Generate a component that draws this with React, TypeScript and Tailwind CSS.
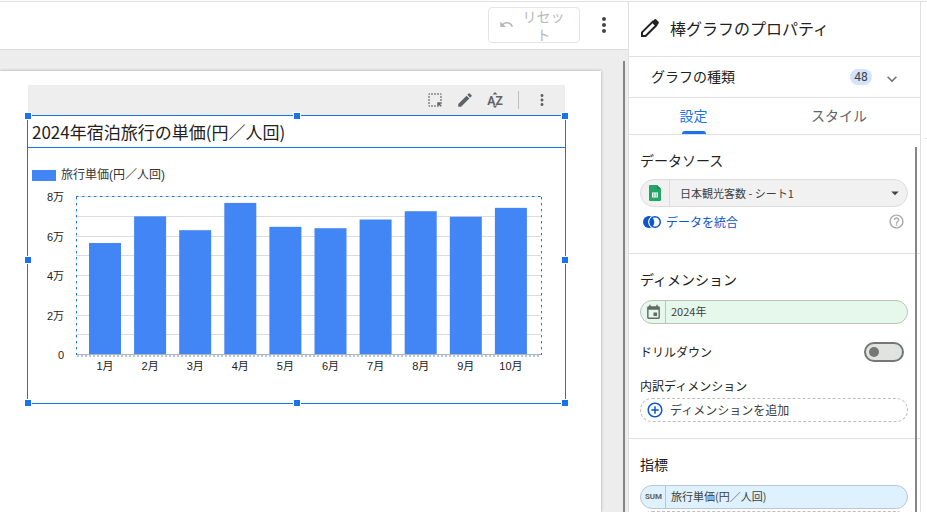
import React, { useState } from 'react';
import {
  MdAddCircleOutline,
  MdArrowDropDown,
  MdEdit,
  MdEvent,
  MdExpandMore,
  MdHelpOutline,
  MdHighlightAlt,
  MdMoreVert,
  MdUndo,
} from 'react-icons/md';

interface MonthItem {
  label: string;
  value: number;
}

// unit price per guest, in units of 10,000 yen
const months: MonthItem[] = [
  { label: '1月', value: 5.67 },
  { label: '2月', value: 7.02 },
  { label: '3月', value: 6.32 },
  { label: '4月', value: 7.7 },
  { label: '5月', value: 6.49 },
  { label: '6月', value: 6.42 },
  { label: '7月', value: 6.86 },
  { label: '8月', value: 7.28 },
  { label: '9月', value: 7.0 },
  { label: '10月', value: 7.45 },
];

const PLOT = { left: 48, right: 513, top: 10, bottom: 168 };
const STEP = 45.1;
const UNIT = (PLOT.bottom - PLOT.top) / 8;

const yOf = (value: number) => PLOT.bottom - value * UNIT;

// ============================================================================
// Icons
// ============================================================================

const PencilIcon: React.FC = () => (
  <svg width="20" height="20" viewBox="0 0 20 20" aria-hidden="true">
    <path d="M2 18v-3.6L12.8 3.6l3.6 3.6L5.600 18z" fill="none" stroke="currentColor" strokeWidth="2" strokeLinejoin="round" />
    <path d="M11.600 4.200l2.500-2.500a1.700 1.700 0 0 1 2.400 0l1.800 1.800a1.700 1.700 0 0 1 0 2.400l-2.500 2.500z" fill="currentColor" />
    <path d="M1 15.500l3.500 3.500H1z" fill="currentColor" />
  </svg>
);

const SortIcon: React.FC = () => (
  <svg width="18" height="18" viewBox="0 0 18 18" fill="currentColor" aria-hidden="true">
    <path d="M6.500 3.500L9 1l2.500 2.500zM6.500 14.500L9 17l2.500-2.500z" />
    <text x="9" y="13.500" textAnchor="middle" className="text-[12px] font-bold font-['Roboto']">AZ</text>
  </svg>
);

const BlendIcon: React.FC = () => (
  <svg width="20" height="14" viewBox="0 0 20 14" aria-hidden="true">
    <circle cx="7" cy="7" r="6" fill="#0b57d0" />
    <circle cx="13" cy="7" r="6.500" fill="#fff" />
    <circle cx="13" cy="7" r="5.300" fill="none" stroke="#0b57d0" strokeWidth="1.500" />
    <path d="M10 2.200a6 6 0 0 1 0 9.600a6 6 0 0 1 0-9.600z" fill="#0b57d0" />
    <path d="M9.300 1.800a6.400 6.400 0 0 0 0 10.400" fill="none" stroke="#fff" strokeWidth="1" />
  </svg>
);

const SheetsIcon: React.FC = () => (
  <svg width="12" height="16" viewBox="0 0 12 16" aria-hidden="true">
    <path d="M1 0h7l4 4v11a1 1 0 0 1-1 1H1a1 1 0 0 1-1-1V1a1 1 0 0 1 1-1z" fill="#23a566" />
    <path d="M8 0l4 4H8z" fill="#1c8c55" />
    <path d="M3 7.500h6v5H3z" fill="#fff" />
    <path d="M4 8.500h1.500v1H4zM6.500 8.500H8v1H6.500zM4 10.500h1.500v1H4zM6.500 10.500H8v1H6.500z" fill="#23a566" />
  </svg>
);

// ============================================================================
// Chart
// ============================================================================

const BarChart: React.FC = () => (
  <svg
    viewBox="0 0 537 216"
    className="block w-full h-auto text-[11px] font-['Liberation_Sans','Noto_Sans_CJK_JP',sans-serif]"
    role="img"
    aria-label="旅行単価(円／人回)"
  >
    {[1, 2, 3, 4, 5, 6, 7, 8].map((v) => (
      <rect key={v} x={PLOT.left} y={Math.round(yOf(v)) - 1} width={PLOT.right - PLOT.left} height="1" fill="#dcdcdc" />
    ))}
    {months.map((m, i) => (
      <rect key={m.label} x={61 + i * STEP} y={yOf(m.value)} width="32" height={PLOT.bottom - yOf(m.value)} fill="#4285f4" />
    ))}
    <rect x={PLOT.left} y={PLOT.bottom - 1} width={PLOT.right - PLOT.left} height="1" fill="#b3b3b3" />
    <path d={`M${PLOT.left + 1} 169H${PLOT.right - 2}`} stroke="#a8c7fa" strokeWidth="2" strokeDasharray="2 2" />
    <path d="M48 9.5H514M48.5 10V168M513.5 10V168" fill="none" stroke="#1a73e8" strokeDasharray="2 4" />
    <path d="M48 9.5H514M48.5 10V168M513.5 10V168" fill="none" stroke="#1a73e8" strokeOpacity="0.4" strokeDasharray="3 3" />
    {[0, 2, 4, 6, 8].map((v) => (
      <text key={v} x="36" y={yOf(v) + 4} textAnchor="end" fill="#222">
        {v === 0 ? '0' : `${v}万`}
      </text>
    ))}
    {months.map((m, i) => (
      <text key={m.label} x={77 + i * STEP} y="183" textAnchor="middle" fill="#222">
        {m.label}
      </text>
    ))}
  </svg>
);

const handles = [
  '-left-1 -top-1',
  'left-1/2 -translate-x-1/2 -top-1',
  '-right-1 -top-1',
  '-left-1 top-1/2 -translate-y-1/2',
  '-right-1 top-1/2 -translate-y-1/2',
  '-left-1 -bottom-1',
  'left-1/2 -translate-x-1/2 -bottom-1',
  '-right-1 -bottom-1',
];

const ChartWidget: React.FC = () => (
  <div className="ml-[27px] mr-[35px]">
    <div className="mx-px h-[30px] bg-[#eee] flex items-center justify-end text-[#5f6368]">
      <button aria-label="範囲を選択" className="mr-3"><MdHighlightAlt size={18} /></button>
      <button aria-label="編集" className="mr-3"><MdEdit size={18} /></button>
      <button aria-label="並べ替え" className="mr-3.5"><SortIcon /></button>
      <span className="w-px h-[18px] bg-[#bdbdbd] mr-3.5" />
      <button aria-label="その他" className="mr-3.5"><MdMoreVert size={18} /></button>
    </div>

    <div className="relative border border-[#1a73e8]">
      <h2 className="h-8 pl-1 border-b border-[#1a73e8] text-[17px] leading-8 text-[#212121]">
        2024年宿泊旅行の単価(円／人回)
      </h2>
      <div className="mt-[19px] ml-1 h-4 flex items-center gap-[5px] text-xs leading-4 text-[#333] font-['Liberation_Sans','Noto_Sans_CJK_JP',sans-serif]">
        <span className="w-6 h-[11px] bg-[#4285f4]" />
        旅行単価(円／人回)
      </div>
      <div className="mt-1">
        <BarChart />
      </div>
      {handles.map((place) => (
        <span key={place} className={`absolute size-2 bg-[#1a73e8] border border-white ${place}`} />
      ))}
    </div>
  </div>
);

// ============================================================================
// Properties panel
// ============================================================================

const PropertiesPanel: React.FC = () => {
  const [tab, setTab] = useState<'setup' | 'style'>('setup');
  const [drilldown, setDrilldown] = useState(false);

  return (
    <aside className="w-[293px] shrink-0 flex flex-col border-x border-[#e0e0e0] text-[#212121]">
      <header className="h-[55px] shrink-0 pl-[11px] pb-0.5 flex items-center gap-2.5 border-b border-[#e0e0e0]">
        <PencilIcon />
        <h1 className="text-base">棒グラフのプロパティ</h1>
      </header>

      <button className="h-[41px] shrink-0 pl-[22px] pr-[18px] pb-0.5 flex items-center border-b border-[#e0e0e0] text-left">
        <span className="flex-1 text-sm">グラフの種類</span>
        <span className="w-[22px] h-4 mt-0.5 rounded-full bg-[#d3e3fd] text-center text-xs leading-4 text-[#3c4043] font-['Roboto']">48</span>
        <MdExpandMore size={20} className="ml-2.5 mt-1.5 text-[#757575]" />
      </button>

      <div role="tablist" className="h-[37px] shrink-0 flex border-b border-[#e0e0e0] text-sm">
        <button role="tab" aria-selected={tab === 'setup'} onClick={() => setTab('setup')} className="w-[129px] flex flex-col items-center justify-between text-[#1a73e8]">
          <span className="leading-8 pt-px">設定</span>
          {tab === 'setup' && <span className="w-6 h-[3px] rounded-t-full bg-[#1a73e8]" />}
        </button>
        <button role="tab" aria-selected={tab === 'style'} onClick={() => setTab('style')} className="flex-1 flex flex-col items-center justify-between text-[#5f6368]">
          <span className="leading-8 pt-px">スタイル</span>
          {tab === 'style' && <span className="w-6 h-[3px] rounded-t-full bg-[#1a73e8]" />}
        </button>
      </div>

      <div className="relative flex-1 min-h-0 overflow-hidden">
        {/* Data source */}
        <section className="h-[119px] pt-[15px] pl-[11px] pr-3 border-b border-[#e0e0e0]">
          <label htmlFor="source" className="block text-sm leading-5">データソース</label>
          <div className="mt-[9px] h-7 flex items-center rounded-full border border-[#dadce0] bg-[#f1f1f1] overflow-hidden">
            <span className="w-[29px] h-full flex items-center justify-center border-r border-[#dadce0]"><SheetsIcon /></span>
            <select id="source" className="flex-1 h-full pl-2.5 appearance-none bg-transparent text-[11px] text-[#3c4043]">
              <option>日本観光客数 - シート1</option>
            </select>
            <MdArrowDropDown size={18} className="mr-[3px] text-[#444]" />
          </div>
          <div className="mt-1.5 px-0.5 flex items-center justify-between">
            <a href="#blend" className="flex items-center gap-1 text-xs text-[#0b57d0]">
              <BlendIcon />
              データを統合
            </a>
            <button aria-label="ヘルプ" className="mr-px"><MdHelpOutline size={17} className="text-[#a8a8a8]" /></button>
          </div>
        </section>

        {/* Dimensions */}
        <section className="h-[185px] pt-[15px] pl-[11px] pr-3 border-b border-[#e0e0e0]">
          <h2 className="text-sm leading-5">ディメンション</h2>
          <button className="mt-[11px] w-full h-6 flex items-center rounded-full border border-[#bdc1bf] bg-[#e6f8ec] text-[11px] text-[#3c4043] overflow-hidden">
            <span className="w-[25px] h-full flex items-center justify-center border-r border-[#bdc1bf]"><MdEvent size={17} className="text-[#5f6b63]" /></span>
            <span className="pl-[5px] pb-px">2024年</span>
          </button>
          <div className="mt-[18px] h-5 pr-1 flex items-center justify-between">
            <label htmlFor="drilldown" className="text-xs">ドリルダウン</label>
            <input
              id="drilldown"
              type="checkbox"
              role="switch"
              checked={drilldown}
              onChange={(e) => setDrilldown(e.target.checked)}
              className="appearance-none w-10 h-5 pl-[3px] flex items-center rounded-full border-2 border-[#747775] bg-[#e1e3e1] before:size-2.5 before:rounded-full before:bg-[#747775] checked:before:ml-5"
            />
          </div>
          <h3 className="mt-4 text-xs leading-4">内訳ディメンション</h3>
          <button className="mt-1 w-full h-6 pl-[5px] flex items-center gap-1.5 rounded-full border border-dashed border-[#bdbdbd] text-xs text-[#3c4043]">
            <MdAddCircleOutline size={18} className="text-[#0b57d0]" />
            ディメンションを追加
          </button>
        </section>

        {/* Metrics */}
        <section className="pt-[15px] pl-[11px] pr-3">
          <h2 className="text-sm leading-5">指標</h2>
          <button className="mt-[11px] w-full h-6 flex items-center rounded-full border border-[#bcc5cb] bg-[#def1fe] text-[11px] text-[#3c4043] overflow-hidden">
            <span className="w-[25px] h-full pl-px flex items-center justify-center border-r border-[#bcc5cb] text-[8px] font-bold text-[#5f6368] font-['Roboto']">SUM</span>
            <span className="pl-[5px] pb-px">旅行単価(円／人回)</span>
          </button>
          <button aria-label="指標を追加" className="mt-0.5 w-full h-6 block rounded-full border border-dashed border-[#bdbdbd]" />
        </section>

        {/* scroll thumb */}
        <div className="absolute top-3 bottom-0 right-[3px] w-0.5 bg-[#868686]" />
      </div>
    </aside>
  );
};

// ============================================================================
// Editor
// ============================================================================

const App: React.FC = () => {
  return (
    <div className="h-screen flex overflow-hidden bg-white pt-px font-['Noto_Sans_CJK_JP',sans-serif]">
      <div className="flex-1 min-w-0 flex border-t border-[#e0e0e0]">
        <main className="flex-1 min-w-0 flex flex-col">
          <div className="h-12 shrink-0 pr-3 flex items-center justify-end border-b border-[#dcdcdc]">
            <button disabled className="w-[92px] h-9 mb-0.5 px-2.5 flex items-center rounded border border-[#e4e4e4] text-sm leading-[18px] text-[#b8b8b8]">
              <MdUndo size={15} className="shrink-0" />
              <span className="flex-1 pl-1 text-center">リセット</span>
            </button>
            <button aria-label="その他の操作" className="ml-3 mb-0.5 text-[#444746]"><MdMoreVert size={24} /></button>
          </div>

          <div className="flex-1 min-h-0 flex bg-[#ededed]">
            <div className="flex-1 min-w-0 mt-[21px] pt-3.5 bg-white shadow-[0_0_3px_rgba(0,0,0,0.3)]">
              <ChartWidget />
            </div>
            <div className="w-[27px] shrink-0 pt-[11px] pr-[3px] flex justify-end">
              <div className="w-0.5 bg-[#868686]" />
            </div>
          </div>
        </main>

        <PropertiesPanel />

        {/* collapsed data panel */}
        <div className="w-1.5 shrink-0 pt-[136px]">
          <div className="ml-1 h-px bg-[#e0e0e0]" />
        </div>
      </div>
    </div>
  );
};

export default App;
